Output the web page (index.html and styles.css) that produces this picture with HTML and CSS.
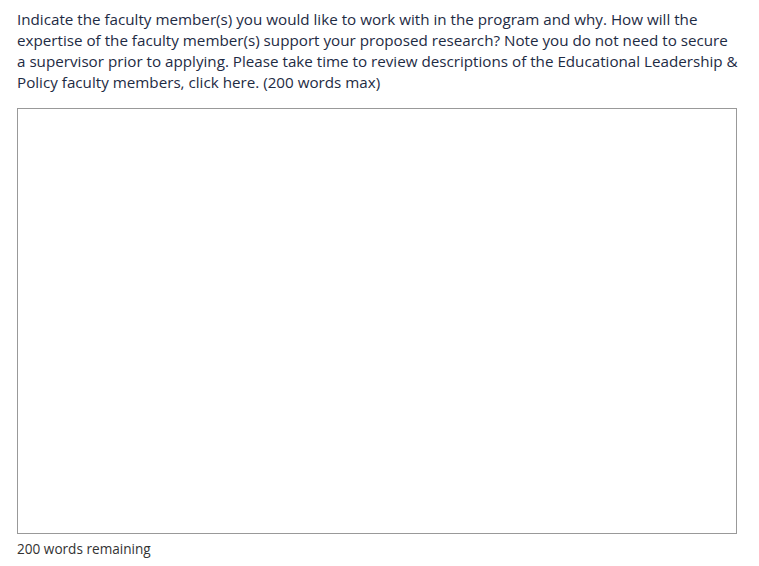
FILE: index.html
```html
<!DOCTYPE html>
<html>
<head>
<meta charset="utf-8">
<link rel="stylesheet" href="styles.css">
</head>
<body>
<div class="field">
  <label class="question" for="answer">Indicate the faculty member(s) you would like to work with in the program and why. How will the expertise of the faculty member(s) support your proposed research? Note you do not need to secure a supervisor prior to applying. Please take time to review descriptions of the Educational Leadership &amp; Policy faculty members, click here. (200 words max)</label>
  <textarea id="answer" class="answer"></textarea>
  <div class="counter">200 words remaining</div>
</div>
</body>
</html>
```

FILE: styles.css
```css
html, body {
  margin: 0;
  padding: 0;
  background: #ffffff;
}
.field {
  padding: 9px 20px 0 17px;
  display: flex;
  flex-direction: column;
  font-family: "Open Sans", "Noto Sans", sans-serif;
}
.question {
  font-size: 15.2px;
  line-height: 21px;
  color: #1e2b44;
  max-width: 721px;
}
.answer {
  margin-top: 15px;
  width: 720px;
  height: 426px;
  box-sizing: border-box;
  border: 1px solid #999999;
  border-radius: 0;
  resize: none;
  padding: 6px;
  font-family: inherit;
}
.counter {
  margin-top: 6px;
  font-size: 13.6px;
  line-height: 18px;
  color: #333333;
}
```
